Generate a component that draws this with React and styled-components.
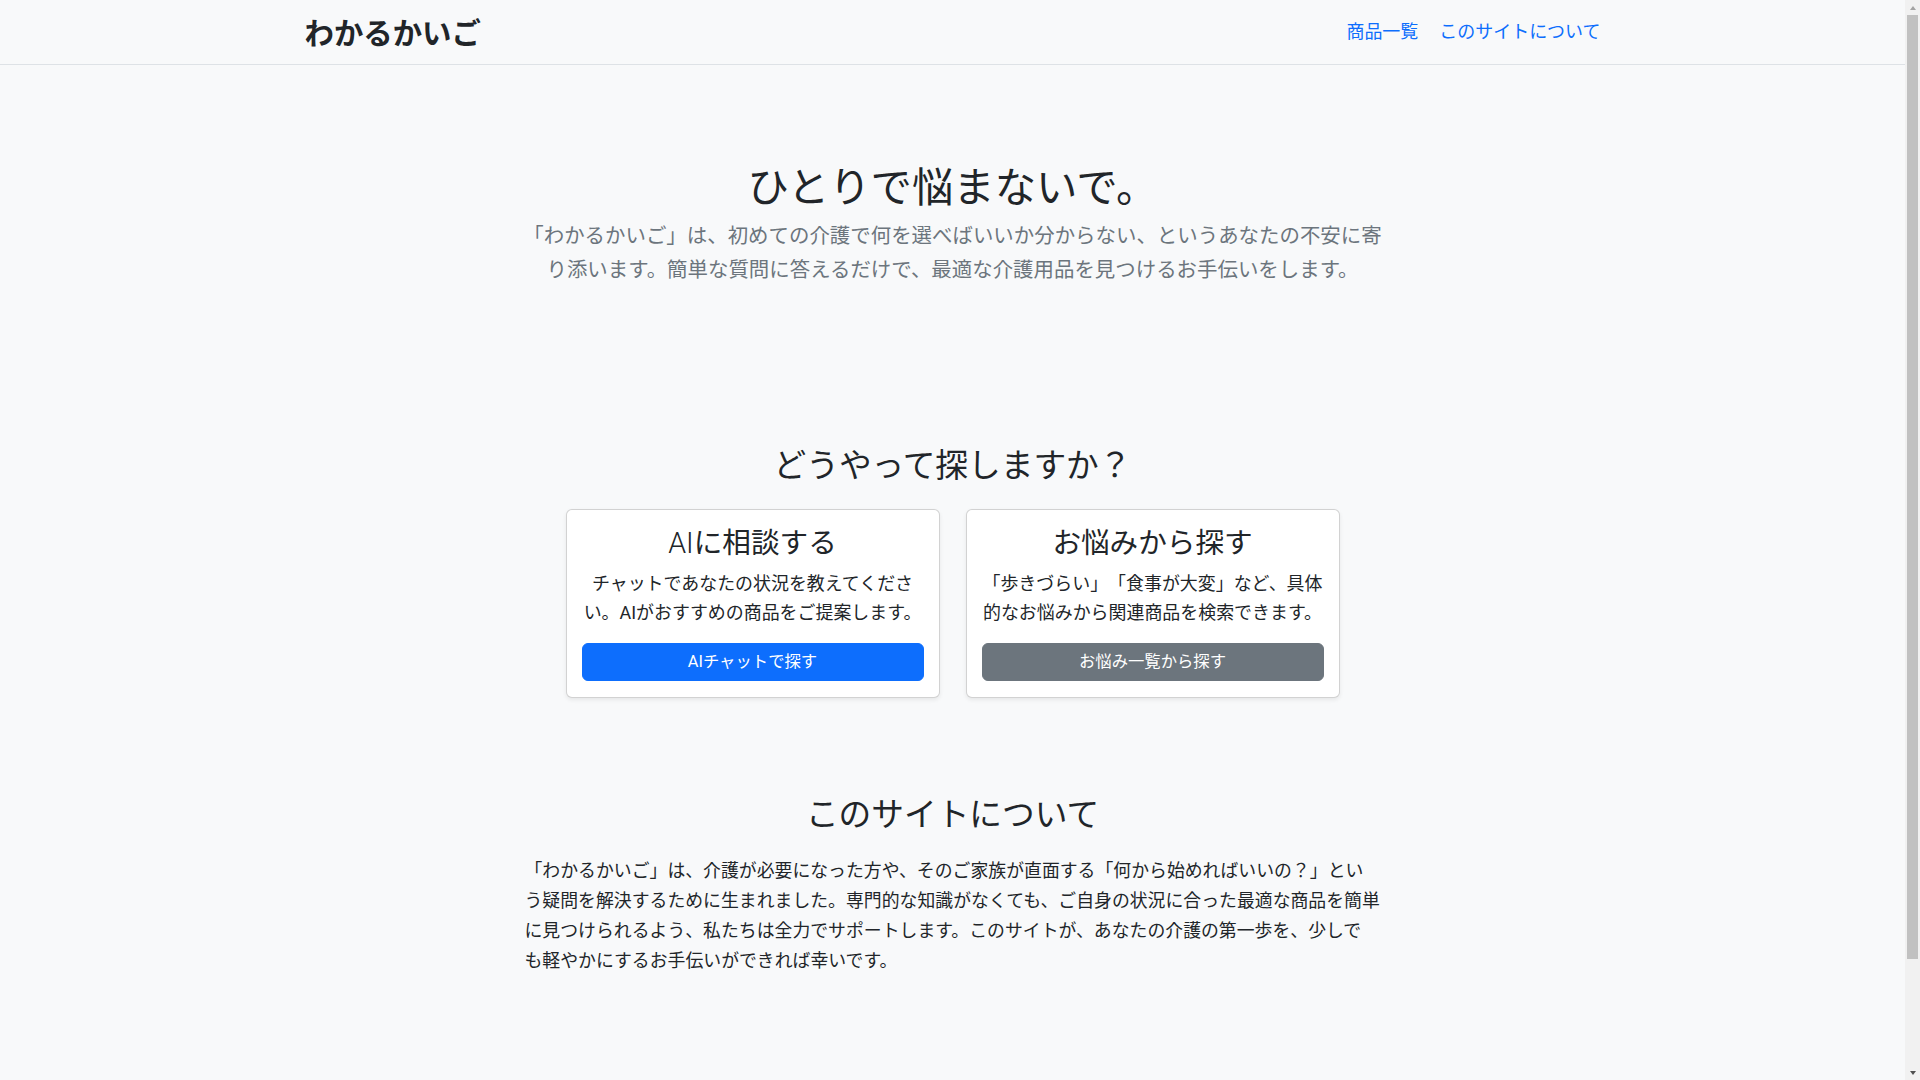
import React from "react";
import styled, { createGlobalStyle } from "styled-components";

const GlobalStyle = createGlobalStyle`
  *, *::before, *::after { box-sizing: border-box; }
  html, body { margin: 0; padding: 0; }
  body {
    background: #f8f9fa;
    color: #212529;
    font-family: Roboto, "Noto Sans CJK JP", sans-serif;
    font-size: 17.98px;
    font-weight: 400;
    line-height: 1.6;
    text-spacing-trim: space-all;
  }
`;

const Frame = styled.div`
  display: flex;
  align-items: flex-start;
`;

const Page = styled.div`
  flex: 1;
  min-width: 0;
`;

/* classic scrollbar drawn at the right edge of the window */
const Scrollbar = styled.div`
  position: sticky;
  top: 0;
  width: 15px;
  height: 100vh;
  flex: none;
  background: #f1f1f1;
  display: flex;
  flex-direction: column;
`;

const ScrollButton = styled.div`
  height: 15px;
  flex: none;
  display: flex;
  align-items: center;
  justify-content: center;
  &::before {
    content: "";
    width: 0;
    height: 0;
    border-left: 3.5px solid transparent;
    border-right: 3.5px solid transparent;
    ${(p) =>
      p.$down
        ? "border-top: 4px solid #505050;"
        : "border-bottom: 4px solid #a3a3a3;"}
  }
`;

const Track = styled.div`
  flex: 1;
  padding: 0 2px;
`;

const Thumb = styled.div`
  height: 944px;
  background: #c1c1c1;
`;

const Navbar = styled.nav`
  height: 65px;
  background: #f8f9fa;
  border-bottom: 1px solid #dee2e6;
  display: flex;
  align-items: center;
`;

const NavInner = styled.div`
  width: 1320px;
  max-width: 100%;
  margin: 0 auto;
  padding: 0 12px;
  display: flex;
  align-items: center;
  justify-content: space-between;
`;

const Brand = styled.a`
  padding-top: 5px;
  font-size: 29.4px;
  font-weight: 700;
  color: #212529;
  text-decoration: none;
  line-height: 1.2;
`;

const NavLinks = styled.div`
  display: flex;
  gap: 21px;
`;

const NavLink = styled.a`
  color: #0d6efd;
  text-decoration: none;
  font-size: 17.98px;
  line-height: 1.5;
`;

const Narrow = styled.div`
  width: ${(p) => p.$width || 864}px;
  margin: 0 auto;
  text-align: ${(p) => p.$align || "center"};
`;

const Hero = styled.section`
  padding-top: 100px;
`;

const HeroTitle = styled.h1`
  margin: 0 0 8px;
  font-size: 41.4px;
  font-weight: 400;
  line-height: 46px;
  color: #212529;
`;

const Lead = styled.p`
  margin: 0;
  font-size: 20.44px;
  line-height: 34px;
  color: #6c757d;
`;

const Section = styled.section`
  padding-top: ${(p) => p.$top}px;
  padding-bottom: ${(p) => p.$bottom || 0}px;
`;

const SectionTitle = styled.h2`
  margin: 0 0 ${(p) => p.$mb}px;
  font-size: 32.7px;
  font-weight: 400;
  line-height: 38.4px;
  text-align: center;
  color: #212529;
`;

const CardRow = styled.div`
  display: flex;
  justify-content: center;
  gap: 26px;
`;

const Card = styled.div`
  width: 374px;
  background: #fff;
  border: 1px solid rgba(0, 0, 0, 0.175);
  border-radius: 6px;
  box-shadow: 0 2px 4px rgba(0, 0, 0, 0.075);
  padding: 16px 15px;
  text-align: center;
  display: flex;
  flex-direction: column;
`;

const CardTitle = styled.h3`
  margin: 0 0 8px;
  font-size: 28.6px;
  font-weight: 400;
  line-height: 35px;
  color: #212529;
`;

const LightLatin = styled.span`
  font-weight: 300;
`;

const CardText = styled.p`
  margin: 0 0 16px;
  font-size: 17.95px;
  line-height: 29px;
  color: #212529;
`;

const Button = styled.a`
  display: block;
  width: 100%;
  padding: 6px 12px;
  font-size: 16.35px;
  line-height: 24px;
  border-radius: 6px;
  text-align: center;
  text-decoration: none;
  color: #fff;
  background: ${(p) => (p.$variant === "secondary" ? "#6c757d" : "#0d6efd")};
  border: 1px solid ${(p) => (p.$variant === "secondary" ? "#6c757d" : "#0d6efd")};
`;

const AboutText = styled.p`
  margin: 0;
  font-size: 17.88px;
  line-height: 30px;
  color: #212529;
  text-align: left;
  white-space: nowrap;
`;

const Footer = styled.footer`
  border-top: 1px solid #dee2e6;
  padding: 46px 0;
  text-align: center;
  color: #6c757d;
  font-size: 14px;
  line-height: 21px;
`;

export default function App() {
  return (
    <>
      <GlobalStyle />
      <Frame>
        <Page>
          <Navbar>
            <NavInner>
              <Brand href="#">わかるかいご</Brand>
              <NavLinks>
                <NavLink href="#">商品一覧</NavLink>
                <NavLink href="#">このサイトについて</NavLink>
              </NavLinks>
            </NavInner>
          </Navbar>

          <Hero>
            <Narrow>
              <HeroTitle>ひとりで悩まないで。</HeroTitle>
              <Lead>
                「わかるかいご」は、初めての介護で何を選べばいいか分からない、というあなたの不安に寄り添います。簡単な質問に答えるだけで、最適な介護用品を見つけるお手伝いをします。
              </Lead>
            </Narrow>
          </Hero>

          <Section $top={160}>
            <SectionTitle $mb={24}>どうやって探しますか？</SectionTitle>
            <CardRow>
              <Card>
                <CardTitle>
                  <LightLatin>AI</LightLatin>に相談する
                </CardTitle>
                <CardText>
                  チャットであなたの状況を教えてください。AIがおすすめの商品をご提案します。
                </CardText>
                <Button href="#">AIチャットで探す</Button>
              </Card>
              <Card>
                <CardTitle>お悩みから探す</CardTitle>
                <CardText>
                  「歩きづらい」「食事が大変」など、具体的なお悩みから関連商品を検索できます。
                </CardText>
                <Button href="#" $variant="secondary">
                  お悩み一覧から探す
                </Button>
              </Card>
            </CardRow>
          </Section>

          <Section $top={98} $bottom={110}>
            <SectionTitle $mb={21}>このサイトについて</SectionTitle>
            <Narrow $align="left" $width={856}>
              <AboutText>
                「わかるかいご」は、介護が必要になった方や、そのご家族が直面する「何から始めればいいの？」とい
                <br />
                う疑問を解決するために生まれました。専門的な知識がなくても、ご自身の状況に合った最適な商品を簡単
                <br />
                に見つけられるよう、私たちは全力でサポートします。このサイトが、あなたの介護の第一歩を、少しで
                <br />
                も軽やかにするお手伝いができれば幸いです。
              </AboutText>
            </Narrow>
          </Section>

          <Footer>© 2024 わかるかいご</Footer>
        </Page>
        <Scrollbar aria-hidden="true">
          <ScrollButton />
          <Track>
            <Thumb />
          </Track>
          <ScrollButton $down />
        </Scrollbar>
      </Frame>
    </>
  );
}
